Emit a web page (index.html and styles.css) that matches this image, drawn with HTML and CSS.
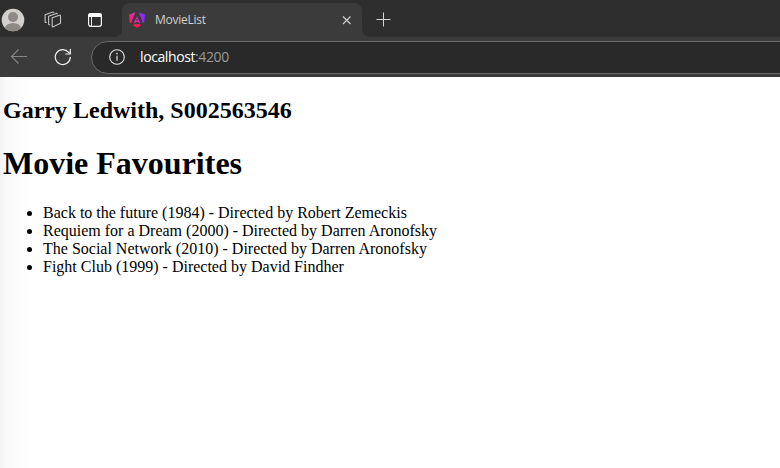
FILE: index.html
```html
<!DOCTYPE html>
<html lang="en">
<head>
<meta charset="utf-8">
<title>MovieList</title>
<link rel="stylesheet" href="styles.css">
</head>
<body>
<header class="browser">
  <div class="tabstrip">
    <div class="tools">
      <svg class="avatar" width="24" height="24" viewBox="0 0 24 24"><defs><clipPath id="face"><circle cx="12" cy="12" r="11.3"/></clipPath></defs><circle cx="12" cy="12" r="11.3" fill="#d2d0cd"/><g clip-path="url(#face)" fill="#8c8987"><circle cx="12" cy="9" r="5"/><ellipse cx="12" cy="20.5" rx="8" ry="5.5"/></g></svg>
      <svg class="workspaces" width="18" height="18" viewBox="0 0 18 18" fill="none" stroke="#c4c4c4" stroke-width="1.1" stroke-linejoin="round" stroke-linecap="round"><path d="M8.2 6.8 15.5 4.3Q16.5 4 16.5 5V12.2L9.2 15.8Q8.2 16.3 8.2 15.2Z"/><path d="M5.8 13.7Q4.6 14 4.6 12.8V5.3L12.2 2.4Q13 2.2 13.2 3"/><path d="M2.2 11.5Q1.1 11.8 1.1 10.7V3.7L8.8 1Q9.6.8 9.8 1.4"/></svg>
      <svg class="tabactions" width="16" height="16" viewBox="0 0 16 16"><rect x="1.6" y="1.6" width="12.8" height="12.8" rx="2.3" fill="none" stroke="#f4f4f4" stroke-width="1.2"/><path d="M1.2 5V3.3Q1.2 1 3.5 1h9Q14.8 1 14.8 3.3V5Z" fill="#fff"/><path d="M4.5 5v9.3" stroke="#e8e8e8"/></svg>
    </div>
    <div class="tab">
      <svg class="favicon" width="16" height="16" viewBox="0 0 16 16"><defs><linearGradient id="brand" x1="0" y1=".4" x2="1" y2=".2"><stop offset="0" stop-color="#ff1979"/><stop offset=".35" stop-color="#f326b8"/><stop offset=".7" stop-color="#b41df0"/><stop offset="1" stop-color="#6337ff"/></linearGradient></defs><g fill="url(#brand)"><path d="M0 2.7 6.2.3 2 11.3.8 10.6ZM9.8.3 16 2.7 15.2 10.6 14 11.3ZM8 4.2 11.3 11.2H9.8L9.2 9.9H6.8L6.2 11.2H4.7ZM8 6.5 7.1 8.7H8.9Z" fill-rule="evenodd"/></g><path d="M5.2 12h5.6l1.2 1.5L8 15.8 4 13.5Z" fill="#ff1457"/></svg>
      <span class="tab-title">MovieList</span>
      <svg class="close" width="10" height="10" viewBox="0 0 10 10"><path d="m1 1.5 7.5 7.5M8.5 1.5 1 9" stroke="#d0d0d0" stroke-width="1.2"/></svg>
    </div>
    <svg class="newtab" width="15" height="15" viewBox="0 0 15 15"><path d="M.5 7.5h14M7.5.5v14" stroke="#d4d4d4"/></svg>
  </div>
  <div class="toolbar">
    <svg class="back" width="18" height="16" viewBox="0 0 18 16" fill="none" stroke="#868686" stroke-width="1.1"><path d="M17 7.5H1.5M8.5.5l-7 7 7 7"/></svg>
    <svg class="reload" width="18" height="18" viewBox="0 0 18 18" fill="none" stroke="#f0f0f0" stroke-width="1.2"><path d="M16.3 9A7.5 7.5 0 1 1 14.6 4.3L16 5.6"/><path d="M16.3 1v5h-5"/></svg>
    <div class="address">
      <svg class="info" width="16" height="16" viewBox="0 0 16 16"><circle cx="8" cy="8" r="7.3" fill="none" stroke="#e3e3e3" stroke-width="1.1"/><path d="M8 6.8v5" stroke="#d2d2d2" stroke-width="1.3"/><circle cx="8" cy="4.6" r=".9" fill="#d2d2d2"/></svg>
      <span class="url">localhost<span class="port">:4200</span></span>
    </div>
  </div>
</header>
<main class="page">
  <h2>Garry Ledwith, S002563546</h2>
  <h1>Movie Favourites</h1>
  <ul>
    <li>Back to the future (1984) - Directed by Robert Zemeckis</li>
    <li>Requiem for a Dream (2000) - Directed by Darren Aronofsky</li>
    <li>The Social Network (2010) - Directed by Darren Aronofsky</li>
    <li>Fight Club (1999) - Directed by David Findher</li>
  </ul>
</main>
</body>
</html>
```
FILE: styles.css
```css
* { box-sizing: border-box; }
body { margin: 0; height: 468px; overflow: hidden; background: #fff; display: flex; flex-direction: column; }
svg { display: block; flex: none; }
.browser { flex: none; height: 77px; background: #3b3b3b; font-family: "Open Sans", "Noto Sans", sans-serif; }
.tabstrip { height: 37px; display: flex; background: linear-gradient(#2e2e2e, #2e2e2e) 370px 0 / 410px 37px no-repeat, linear-gradient(#2e2e2e, #2e2e2e) 362px 0 / 10px 29px no-repeat, radial-gradient(circle at 8px 0, #2e2e2e 7.5px, #3b3b3b 8.5px) 362px 29px / 8px 8px no-repeat, #3b3b3b; }
.tools { width: 122px; height: 37px; display: flex; align-items: center; padding: 3px 0 0 1px; background: #2e2e2e; border-bottom-right-radius: 7px; }
.workspaces { margin-left: 19px; }
.tabactions { margin-left: 25px; }
.tab { width: 240px; height: 37px; display: flex; align-items: center; padding: 3px 10px 0 7px; background: linear-gradient(#2e2e2e, #2e2e2e) 0 0 / 100% 12px no-repeat, #3b3b3b; position: relative; isolation: isolate; }
.tab::before { content: ""; position: absolute; inset: 3px 0 0; z-index: -1; border-radius: 8px 8px 0 0; background: #3b3b3b; }
.tab-title { flex: 1; margin-left: 10px; font-size: 12px; line-height: 16px; letter-spacing: -.25px; color: #d0d0d0; }
.newtab { margin: 12px 0 0 14px; }
.toolbar { height: 40px; display: flex; align-items: center; padding-left: 10px; }
.reload { margin-left: 26px; }
.address { flex: 1; height: 33px; margin: 0 -30px 0 19px; display: flex; align-items: center; padding-left: 17px; border: 1px solid #6b6b6b; border-radius: 17px; background: #292929; }
.url { margin-left: 15px; font-size: 14px; line-height: 18px; letter-spacing: -.4px; color: #fff; }
.port { color: #989898; }
.page { flex: 1; padding: 20px 3px 0; font-family: "Liberation Serif", serif; color: #000; background: linear-gradient(90deg, #f3f3f3 0, #fafafa 7px, #fdfdfd 20px, #fff 36px); }
h2 { margin: 0; font-size: 24px; line-height: 27px; }
h1 { margin: 21px 0 0; font-size: 32px; line-height: 37px; }
ul { margin: 22px 0 0; padding-left: 40px; font-size: 16px; line-height: 18px; }
```
